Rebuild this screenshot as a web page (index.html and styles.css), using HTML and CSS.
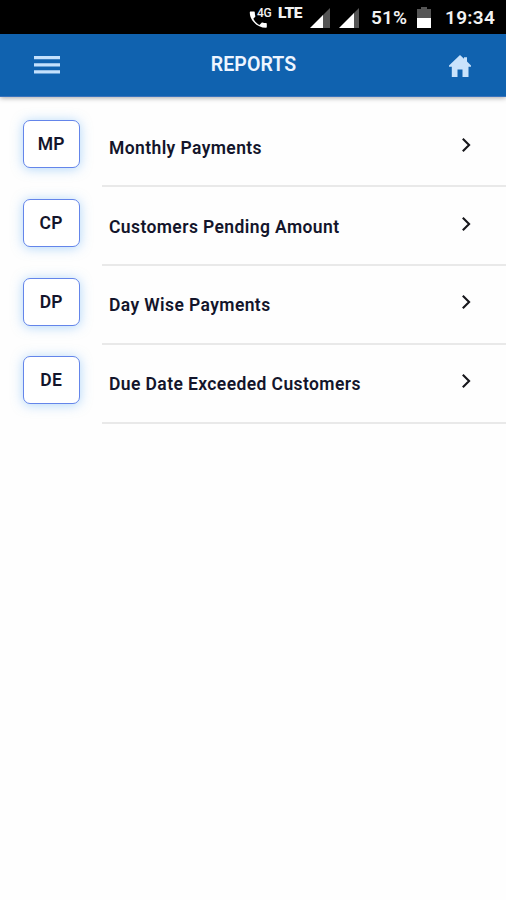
FILE: index.html
```html
<!DOCTYPE html>
<html lang="en">
<head>
<meta charset="utf-8">
<title>Reports</title>
<link rel="stylesheet" href="styles.css">
</head>
<body>
<div class="status">
  <svg class="call" width="19" height="20" viewBox="0 0 19 20"><path fill="#fff" d="M1.800 2.500h3c.6 0 1 .4 1 1 0 1.100.2 2.300.5 3.400.1.400 0 .8-.3 1.100L4.300 9.800c1.500 2.800 3.400 4.700 6.100 6.100l2-2c.3-.3.7-.4 1.100-.3 1.100.4 2.200.5 3.300.5.600 0 1 .4 1 1v2.600c0 .6-.4 1-1 1C8.500 18.700.8 11.600.8 3.500c0-.6.4-1 1-1z"/></svg>
  <span class="net">4G</span>
  <span class="lte">LTE</span>
  <svg class="signal" width="21" height="20" viewBox="0 0 21 20"><path fill="#555" d="M20 0v20H12V8z"/><path fill="#fff" d="M0 20 13 7v13z"/></svg>
  <svg class="signal second" width="21" height="20" viewBox="0 0 21 20"><path fill="#555" d="M20 0v20H14V6z"/><path fill="#fff" d="M0 20 15 5v15z"/></svg>
  <span class="percent">51%</span>
  <svg class="battery" width="14" height="22" viewBox="0 0 14 22"><path fill="#555" d="M4 0h6v2h4v10H0V2h4z"/><path fill="#fff" d="M0 11h14v10H0z"/></svg>
  <span class="clock">19:34</span>
</div>
<header class="bar">
  <svg class="menu" width="26" height="18" viewBox="0 0 26 18"><path fill="#c4e0fc" d="M0 0h26v3.200H0zM0 7.200h26v3.200H0zM0 14.300h26v3.200H0z"/></svg>
  <h1 class="title">REPORTS</h1>
  <svg class="home" width="22" height="22" viewBox="0 0 22 22"><path fill="#c9e2fb" d="M11 0 15 3.700V2.200h3v4.300L22 10.500v1.300h-2.500V22H13.500v-7.500h-5V22H2.800V11.800H0v-1.300z"/></svg>
</header>
<main class="list">
  <div class="row"><div class="badge">MP</div><div class="item"><span class="label">Monthly Payments</span><svg class="chevron" width="10" height="16" viewBox="0 0 10 16"><path d="m1.800 1.700 6.300 6.300-6.300 6.300"/></svg></div></div>
  <div class="row"><div class="badge">CP</div><div class="item"><span class="label">Customers Pending Amount</span><svg class="chevron" width="10" height="16" viewBox="0 0 10 16"><path d="m1.800 1.700 6.300 6.300-6.300 6.300"/></svg></div></div>
  <div class="row"><div class="badge">DP</div><div class="item"><span class="label">Day Wise Payments</span><svg class="chevron" width="10" height="16" viewBox="0 0 10 16"><path d="m1.800 1.700 6.300 6.300-6.300 6.300"/></svg></div></div>
  <div class="row"><div class="badge">DE</div><div class="item"><span class="label">Due Date Exceeded Customers</span><svg class="chevron" width="10" height="16" viewBox="0 0 10 16"><path d="m1.800 1.700 6.300 6.300-6.300 6.300"/></svg></div></div>
</main>
</body>
</html>
```
FILE: styles.css
```css
* { box-sizing: border-box; }
body { margin: 0; height: 900px; background: #fefefe; color: #13152b; font-family: Roboto, sans-serif; overflow: hidden; }
svg { display: block; flex: none; }
.status { display: flex; align-items: flex-start; height: 34px; background: #000; color: #f2f2f2; white-space: nowrap; }
.call { margin: 9px 0 0 249px; }
.net { width: 15px; margin: 7px 0 0 -11px; font-size: 12px; line-height: 13px; font-weight: 500; letter-spacing: -0.3px; }
.lte { width: 26px; margin: 5px 0 0 6px; font-size: 15.500px; line-height: 16px; font-weight: 900; letter-spacing: -0.4px; }
.signal { margin: 8px 0 0 6px; }
.second { margin-left: 8px; }
.percent { width: 38px; margin: 7px 0 0 11px; font-size: 19px; line-height: 22px; font-weight: 600; letter-spacing: 0.1px; }
.battery { margin: 7px 0 0 8px; }
.clock { margin: 7px 0 0 14px; font-size: 19px; line-height: 22px; font-weight: 600; letter-spacing: 0.3px; }
.bar { display: flex; justify-content: space-between; align-items: center; height: 63px; padding: 0 35px 0 34px; background: #1062af; border-bottom: 1px solid #3973bd; box-shadow: 0 1px 5px rgba(0, 0, 0, .35); }
.title { margin: 0 2px 1px 0; color: #eef5ff; font-size: 19.500px; line-height: 24px; font-weight: 600; letter-spacing: 0.1px; }
.home { margin-top: 2px; }
.list { padding-top: 11.400px; }
.row { display: flex; height: 78.800px; padding-left: 23px; }
.badge { width: 56.500px; height: 48px; margin: 11.600px 22.500px 0 0; border: 1.500px solid #6485ea; border-radius: 7px; background: #fff; box-shadow: 0 1px 12px rgba(100, 175, 245, .5); font-size: 17.500px; line-height: 46px; font-weight: 600; text-align: center; letter-spacing: 0.3px; }
.item { display: flex; flex: 1; justify-content: space-between; align-items: flex-start; padding: 27.500px 35px 0 7px; border-bottom: 2px solid #e9e9e9; }
.label { font-size: 17.500px; line-height: 24px; font-weight: 600; letter-spacing: 0.4px; white-space: nowrap; }
.chevron { margin-top: 1px; }
.chevron path { fill: none; stroke: #17171c; stroke-width: 2.100; }
```
